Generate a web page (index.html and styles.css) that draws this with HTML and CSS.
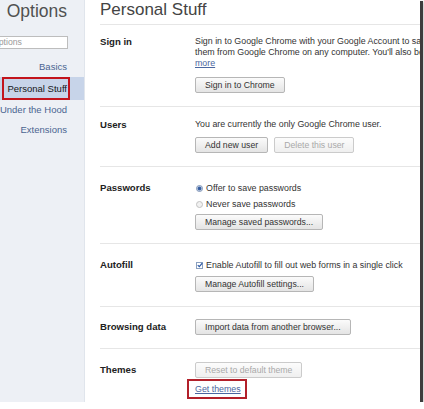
FILE: index.html
```html
<!DOCTYPE html>
<html>
<head>
<meta charset="utf-8">
<title>Options - Personal Stuff</title>
<link rel="stylesheet" href="styles.css">
</head>
<body>
<div class="frame">
  <aside class="sidebar">
    <div class="side-inner">
      <h1 class="side-title">Options</h1>
      <div class="search">Search options</div>
      <nav class="nav">
        <div class="nav-item">Basics</div>
        <div class="nav-item selected"><span class="hl">Personal Stuff</span></div>
        <div class="nav-item">Under the Hood</div>
        <div class="nav-item">Extensions</div>
      </nav>
    </div>
  </aside>
  <main class="main">
    <h2 class="page-title">Personal Stuff</h2>

    <section class="sec sec-signin">
      <h3 class="label lh-text">Sign in</h3>
      <div class="ctrl">
        <p class="desc">Sign in to Google Chrome with your Google Account to save your personalized browser features to the web and access<br>them from Google Chrome on any computer. You'll also be automatically signed in to your favorite Google services. Learn<br><a class="link">more</a></p>
        <div class="btn-row mt8"><button class="btn">Sign in to Chrome</button></div>
      </div>
    </section>

    <section class="sec">
      <h3 class="label lh-text">Users</h3>
      <div class="ctrl">
        <p class="desc">You are currently the only Google Chrome user.</p>
        <div class="btn-row mt7">
          <button class="btn">Add new user</button>
          <button class="btn disabled">Delete this user</button>
        </div>
      </div>
    </section>

    <section class="sec pt13">
      <h3 class="label lh-row">Passwords</h3>
      <div class="ctrl">
        <div class="opt"><span class="radio on"></span>Offer to save passwords</div>
        <div class="opt"><span class="radio"></span>Never save passwords</div>
        <div class="btn-row mt2"><button class="btn">Manage saved passwords...</button></div>
      </div>
    </section>

    <section class="sec pt13 pb14">
      <h3 class="label lh-row">Autofill</h3>
      <div class="ctrl">
        <div class="opt"><span class="check"><svg viewBox="0 0 8 8" width="6" height="6"><path d="M1 4.2 L3.1 6.2 L7 1.4" fill="none" stroke="#2a58a6" stroke-width="1.6"/></svg></span>Enable Autofill to fill out web forms in a single click</div>
        <div class="btn-row mt3"><button class="btn">Manage Autofill settings...</button></div>
      </div>
    </section>

    <section class="sec">
      <h3 class="label lh-row">Browsing data</h3>
      <div class="ctrl">
        <div class="btn-row"><button class="btn">Import data from another browser...</button></div>
      </div>
    </section>

    <section class="sec pt13 last">
      <h3 class="label lh-row">Themes</h3>
      <div class="ctrl">
        <div class="btn-row"><button class="btn disabled">Reset to default theme</button></div>
        <div class="themes-row"><span class="mark"><a class="link">Get themes</a></span></div>
      </div>
    </section>
  </main>
</div>
</body>
</html>
```

FILE: styles.css
```css
html, body {
  margin: 0;
  padding: 0;
  background: #ffffff;
}

body {
  font-family: "Liberation Sans", Arial, sans-serif;
  font-variant-ligatures: none;
}

.frame {
  width: 420px;
  height: 402px;
  display: flex;
  overflow: hidden;
  background: #ffffff;
  box-shadow: 2px 2px 0 1px #3d3d3d, 3px 3px 3px 1px rgba(0, 0, 0, 0.25);
}

/* ---------- sidebar ---------- */
.sidebar {
  width: 84px;
  flex: none;
  background: #edf0f5;
  border-right: 1px solid #e0e5ec;
  overflow: hidden;
}

.side-inner {
  margin-left: -40px;
  width: 124px;
  text-align: right;
}

.side-title {
  margin: 0;
  padding: 1px 17px 0 0;
  font-size: 17.5px;
  font-weight: normal;
  line-height: 20px;
  color: #505050;
}

.search {
  margin: 15px 16px 0 0;
  height: 13px;
  box-sizing: border-box;
  border: 1px solid #bdbdbd;
  background: #ffffff;
  text-align: left;
  padding-left: 3px;
  font-size: 8.7px;
  line-height: 11px;
  color: #9a9a9a;
  white-space: nowrap;
  overflow: hidden;
}

.nav {
  margin-top: 8px;
}

.nav-item {
  padding-right: 17px;
  font-size: 9.5px;
  line-height: 20px;
  color: #4a6491;
  white-space: nowrap;
}

.nav-item.selected {
  background: #c7d4e9;
  color: #151515;
  line-height: 23px;
}

.hl {
  display: inline-block;
  vertical-align: top;
  line-height: 19px;
  border: 2px solid #c3141c;
  padding: 0 1px 0 3px;
  margin-right: -3px;
}

/* ---------- main ---------- */
.main {
  flex: 1;
  min-width: 0;
  padding-left: 15px;
}

.page-title {
  margin: 0;
  padding-bottom: 4px;
  font-size: 17px;
  font-weight: normal;
  line-height: 20px;
  color: #444444;
  border-bottom: 1px solid #e6e6e6;
  white-space: nowrap;
}

.sec {
  display: flex;
  align-items: flex-start;
  padding: 12px 0 13px;
  border-bottom: 1px solid #e6e6e6;
}

.sec-signin { padding-top: 11px; }
.pt13 { padding-top: 13px; }
.pb14 { padding-bottom: 14px; }
.sec.last { border-bottom: none; }

.label {
  width: 95px;
  flex: none;
  margin: 0;
  font-size: 9.6px;
  font-weight: bold;
  color: #222222;
  white-space: nowrap;
}

.lh-text { line-height: 11px; }
.lh-row { line-height: 16px; }

.ctrl {
  font-size: 8.85px;
  color: #333333;
  white-space: nowrap;
}

.desc {
  margin: 0;
  line-height: 11px;
}

.link {
  color: #4b67a0;
  text-decoration: underline;
}

.btn-row {
  display: flex;
  gap: 6px;
}

.mt2 { margin-top: 2px; }
.mt3 { margin-top: 3px; }
.mt7 { margin-top: 7px; }
.mt8 { margin-top: 8px; }

.btn {
  height: 16px;
  box-sizing: border-box;
  padding: 0 9px;
  margin: 0;
  border: 1px solid #b6b6b6;
  border-radius: 2px;
  background: linear-gradient(#fbfbfb, #e4e4e4);
  font-family: inherit;
  font-size: 8.7px;
  line-height: 14px;
  color: #333333;
  white-space: nowrap;
}

.btn.disabled {
  color: #a9a9a9;
  border-color: #cbcbcb;
  background: linear-gradient(#fcfcfc, #efefef);
}

.opt {
  display: flex;
  align-items: center;
  height: 16px;
}

.radio {
  width: 7px;
  height: 7px;
  box-sizing: border-box;
  border-radius: 50%;
  border: 1px solid #c2c2c2;
  background: #f1f1f1;
  margin: 0 3px 0 1px;
  flex: none;
}

.radio.on {
  border-color: #7e94b6;
  background: radial-gradient(circle, #2f5699 0, #3d66a8 1.6px, #e8edf5 2.4px);
}

.check {
  width: 7px;
  height: 7px;
  box-sizing: border-box;
  border: 1px solid #8aa0bf;
  background: #ffffff;
  margin: 0 3px 0 1px;
  flex: none;
  display: flex;
  align-items: center;
  justify-content: center;
}

.check svg {
  display: block;
  flex: none;
}

.themes-row {
  margin-top: 1px;
}

.mark {
  display: inline-block;
  margin-left: -8px;
  padding: 0 4px 0 6px;
  border: 2px solid #b2202a;
  line-height: 16px;
}
```
